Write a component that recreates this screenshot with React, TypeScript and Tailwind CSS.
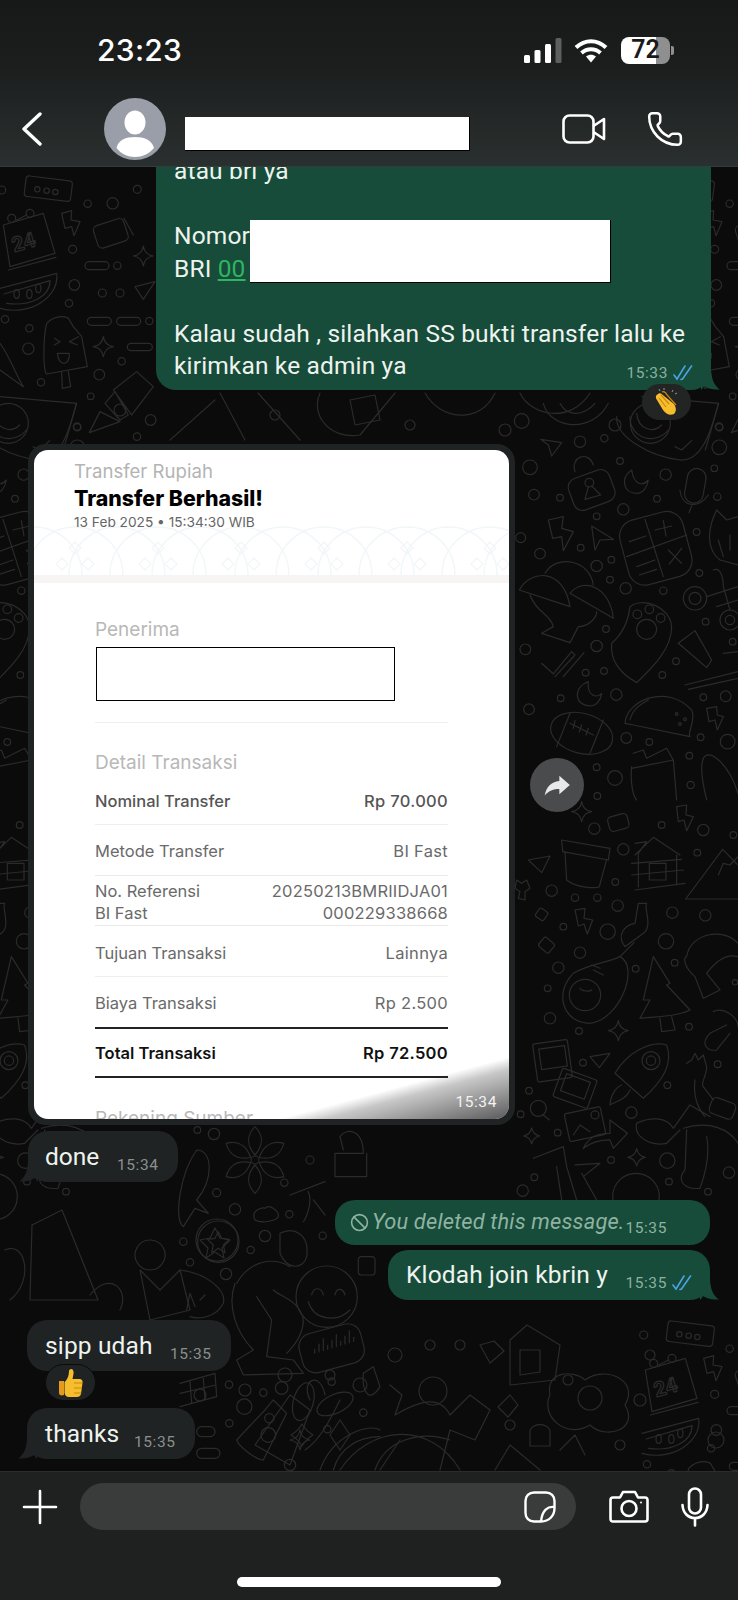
import { Ban, Phone } from "lucide-react";

const SF = "font-['Roboto','Liberation_Sans',sans-serif]";
const RECEIPT = "font-['Inter','Liberation_Sans',sans-serif]";

type Dot = [number, number, number];

function sparkle(x: number, y: number, r: number) {
  return `M${x} ${y - r}Q${x + 4} ${y - 4} ${x + r} ${y}Q${x + 4} ${y + 4} ${x} ${y + r}Q${x - 4} ${y + 4} ${x - r} ${y}Q${x - 4} ${y - 4} ${x} ${y - r}Z`;
}

function Dots({ items }: { items: Dot[] }) {
  return (
    <>
      {items.map(([x, y, r], i) => (
        <circle key={i} cx={x} cy={y} r={r} />
      ))}
    </>
  );
}

// right column, upper half
function TileRightTop() {
  const dots: Dot[] = [[35,63,22],[210,125,17],[283,115,11],[628,82,11],[628,142,22],[60,202,22],[330,183,10],[467,224,17],[613,205,10],[72,284,16],[150,293,10],[441,296,10],[622,290,11],[340,328,17],[260,349,10],[560,396,10],[32,413,15],[212,443,10],[90,461,16],[304,479,10],[260,498,17],[300,539,10],[347,565,17],[460,572,11],[568,519,10],[288,687,10],[587,665,10],[668,725,10],[46,748,16],[260,738,17],[498,784,10],[227,818,10],[282,813,10],[457,825,10],[319,884,17],[152,895,10],[580,892,10],[647,889,16],[57,928,16],[349,1014,16],[418,1026,10],[572,1012,10],[653,1025,22],[538,1067,10],[260,1102,10],[315,1134,22],[542,1155,11],[262,1188,10]];
  return (
    <g>
      <Dots items={dots} />
      <path d="M115 360L160 350L155 385L190 395L160 452L155 410L128 415Z" />
      <path d="M245 378L310 418L270 420L255 450Z" />
      <path d="M92 118L155 128L125 168L115 135Z" />
      <rect x="180" y="220" width="130" height="100" rx="28" transform="rotate(-20 245 270)" />
      <path d="M195 215C180 170 235 150 250 195" />
      <circle cx="238" cy="248" r="13" />
      <path d="M235 260L225 298L272 285L245 258" />
      <path d="M365 210C330 235 340 280 380 280C400 280 412 262 415 240C400 258 372 258 365 210Z" />
      <rect x="528" y="205" width="56" height="105" rx="28" transform="rotate(10 556 257)" />
      <path d="M510 270C515 325 570 325 595 285M545 318L537 338" />
      <rect x="340" y="345" width="195" height="200" rx="50" transform="rotate(-15 437 445)" />
      <path d="M405 358L460 530M350 470L530 405M435 390L485 378M460 362L468 408M358 425L408 408M475 450L515 490M515 445L478 492M380 500L435 480M388 525L440 508" />
      <path d="M28 570C60 510 160 500 180 620ZM180 580C220 530 300 560 310 655ZM105 520C140 460 240 480 250 555M60 585C80 640 120 640 130 680L95 700L180 728L205 680C240 680 260 650 260 635" />
      <path d="M360 620C400 590 480 620 485 680C485 750 420 810 380 848C330 820 300 780 305 730C340 700 355 660 360 620Z" />
      <Dots items={[[410,688,30],[382,643,13],[418,628,13],[452,654,13]]} />
      <path d="M95 790L130 822L185 755L195 765L135 830M160 830L222 758" />
      <path d="M235 845C190 860 190 915 240 918C260 918 272 900 275 880C262 895 230 890 235 845Z" />
      <ellipse cx="215" cy="1000" rx="95" ry="60" transform="rotate(15 215 1000)" />
      <path d="M180 940L140 1040M280 960L240 1060M180 970L250 1005M195 962L190 985M215 975L208 996M235 985L228 1005" />
      <path d="M345 970C350 900 470 850 545 930C560 960 530 1000 540 1010L370 975ZM360 960C370 920 400 910 415 900" />
      <Dots items={[[500,942,4],[525,958,4],[510,972,4]]} />
      <path d="M505 730L555 692L605 780L590 803L575 790Z" />
      <Dots items={[[555,595,35],[555,595,18],[660,660,30],[660,660,14]]} />
      <path d="M590 590L684 560M610 510C630 500 640 530 640 560L660 630M620 620L684 600" />
      <path d="M320 50C315 110 420 170 510 180C570 185 600 110 625 10M360 50C360 120 440 135 475 90M380 40C385 90 430 100 455 75M495 140L515 150L545 122" />
      <path d="M100 10C120 90 250 100 295 10M150 10C170 50 220 50 255 10" />
      <path d="M620 330C590 390 590 450 630 480L684 495M620 330L650 360L684 350M625 420L640 470M660 405L660 450" />
      <path d="M370 1060L400 1050L410 1075L470 1045L490 1080L500 1200M365 1100C360 1150 370 1190 380 1200M365 1105L490 1080" />
      <path d="M580 1075C600 1040 660 1100 684 1180M590 1200C575 1140 570 1100 580 1075" />
      <path d="M590 925L620 920L622 945L640 950L622 990L615 960L597 965Z" />
      <path d="M525 855L684 815M535 868L684 835M640 760L684 755" />
    </g>
  );
}

// right column, lower half
function TileRightBottom() {
  const dots: Dot[] = [[253,86,17],[340,148,17],[455,75,10],[580,90,17],[670,105,10],[562,158,10],[125,272,17],[316,246,10],[195,293,11],[262,293,11],[323,317,17],[487,338,17],[586,346,17],[160,380,10],[293,395,23],[468,424,23],[210,458,17],[145,503,17],[494,488,10],[377,506,10],[113,565,10],[120,655,17],[537,680,10],[207,693,10],[675,547,8],[219,788,10],[623,793,10],[472,856,10],[57,872,10],[32,943,10],[364,938,17],[143,998,10],[303,1080,10],[472,1082,23],[657,1118,17],[73,1132,10],[477,1145,10],[38,1172,17],[594,1175,10]];
  return (
    <g>
      <Dots items={dots} />
      <path d="M155 120L300 145L295 180L158 155ZM165 155L170 240C200 265 260 265 268 260L290 178" />
      <path d="M375 165L430 112L510 165M385 160L385 260M500 165L500 255M365 190L515 178M365 225L520 210M375 270L525 250M375 130L410 125L385 160" />
      <rect x="418" y="190" width="50" height="50" />
      <path d="M527 297L638 148L684 195M527 297L684 297M625 225L640 190L660 195L684 170" />
      <path d="M345 440L400 400C430 380 400 320 410 310L385 310L375 370C340 375 320 410 345 440Z" />
      <path d="M330 470C390 500 330 660 240 670C160 670 130 580 190 520C240 490 290 490 330 470ZM210 565C215 575 240 575 245 570M250 510L280 525M245 495L270 505M330 470L372 428" />
      <circle cx="225" cy="585" r="47" />
      <path d="M430 470L480 550L470 555L540 630C500 650 440 650 390 655L420 600L400 600ZM450 655L455 695L495 690L485 650" />
      <path d="M530 470C540 400 640 380 684 430M555 530C520 500 520 470 530 470M555 530L580 595L630 570L590 520C620 480 650 460 684 470" />
      <path d="M610 635C640 620 684 650 684 680M650 675L600 700C570 730 590 755 620 750L660 700" />
      <rect x="75" y="725" width="105" height="115" rx="6" transform="rotate(-8 127 782)" />
      <rect x="90" y="742" width="78" height="62" transform="rotate(-8 127 772)" />
      <rect x="140" y="820" width="110" height="90" rx="6" transform="rotate(20 195 865)" />
      <rect x="158" y="832" width="76" height="54" transform="rotate(20 195 860)" />
      <rect x="170" y="930" width="110" height="85" rx="6" transform="rotate(-12 225 972)" />
      <path d="M190 1005L210 975L240 995" />
      <circle cx="255" cy="945" r="12" />
      <path d="M240 770L300 760L268 803Z" />
      <path d="M315 820C350 760 420 720 470 735C490 790 460 840 400 895ZM335 855C310 865 300 900 300 915C330 900 350 895 360 870" />
      <Dots items={[[423,782,27],[423,782,14]]} />
      <path d="M530 790L545 780L555 760L565 780L580 765L590 800C590 830 570 850 580 860L610 900M555 840C550 880 560 920 585 950" />
      <rect x="600" y="900" width="75" height="50" rx="14" transform="rotate(20 637 925)" />
      <path d="M380 970C420 950 470 950 490 985L540 915L600 950M520 985C600 960 660 990 684 1030M380 970C370 1010 420 1040 470 1030L510 990M530 990L525 1110C500 1140 520 1170 570 1165C590 1110 600 1060 590 1010" />
      <path d="M220 1045C240 1005 270 1000 300 1000L300 960L352 1000L310 1045L300 1020C270 1020 240 1030 220 1045Z" />
      <path d={sparkle(215, 35, 30)} />
      <path d={sparkle(325, 692, 30)} />
      <path d={sparkle(380, 1072, 26)} />
      <path d={sparkle(65, 1008, 24)} />
      <circle cx="378" cy="1190" r="70" />
      <path d="M500 20L530 15L528 45L550 50L530 92L522 60L505 65ZM195 330L225 325L222 355L248 360L232 402L222 372L205 378Z" />
      <path d="M70 1075L160 1040L170 1100L200 1200M140 1100L155 1200M195 1095L270 1090L220 1130M215 1120L260 1200" />
      <path d="M20 240L35 250L50 240L60 265L45 275L45 300L25 295L30 275L15 265Z" />
      <rect x="80" y="328" width="30" height="30" rx="6" transform="rotate(35 95 343)" />
      <rect x="90" y="418" width="40" height="35" rx="7" transform="rotate(40 110 435)" />
      <rect x="295" y="45" width="60" height="45" rx="12" transform="rotate(-15 325 67)" />
      <path d="M55 180L120 168L95 218Z" />
      <circle cx="85" cy="925" r="24" />
      <path d="M100 945L118 960" />
    </g>
  );
}

// top left of the chat, comes back at the bottom right
function TileCorner() {
  const dots: Dot[] = [[412,58,12],[263,101,11],[338,100,17],[218,238,12],[352,287,11],[223,345,16],[307,369,12],[360,369,12],[207,400,11],[15,448,11],[88,475,11],[448,453,11],[85,536,17],[365,574,11],[298,614,16],[123,637,11],[272,679,10],[231,770,11],[452,750,16],[411,800,11],[5,60,12]];
  return (
    <g>
      <Dots items={dots} />
      <rect x="75" y="25" width="140" height="62" rx="10" transform="rotate(7 145 56)" />
      <Dots items={[[112,58,8],[140,62,8],[166,66,8]]} />
      <path d="M10 165L130 130L165 250L30 290ZM25 300L168 262M50 150L80 135" />
      <Dots items={[[35,145,12],[90,130,12]]} />
      <text x="35" y="238" fontSize="62" fontFamily="Roboto, sans-serif" fontWeight="700" transform="rotate(-16 70 215)">24</text>
      <path d="M185 130L215 122L213 150L240 155L222 197L215 170L195 175Z" />
      <rect x="285" y="155" width="95" height="70" rx="14" transform="rotate(-18 332 190)" />
      <path d="M372 145L400 195" />
      <path d={sparkle(430, 258, 30)} />
      <path d="M405 350L465 335L430 388Z" />
      <rect x="255" y="275" width="72" height="24" rx="12" />
      <rect x="262" y="442" width="72" height="24" rx="12" />
      <rect x="350" y="442" width="72" height="24" rx="12" />
      <rect x="382" y="520" width="75" height="22" rx="11" />
      <path d="M0 355L170 310C180 380 90 440 0 415M12 372L150 332C150 380 90 410 20 400" />
      <ellipse cx="50" cy="372" rx="8" ry="13" />
      <ellipse cx="88" cy="372" rx="8" ry="13" />
      <ellipse cx="115" cy="355" rx="8" ry="13" />
      <path d="M140 460C170 430 205 440 208 450L220 470L245 500L262 590L140 612C128 600 130 500 140 460ZM185 608L187 655L212 650L205 605M163 505L180 515L163 525M235 500L208 515L232 525M172 550L208 550C210 590 175 590 172 550Z" />
      <path d={sparkle(310, 530, 30)} />
      <path d="M340 660L410 605L460 650L395 735ZM315 700L345 665L385 735L360 750ZM268 788L300 725L360 755Z" />
      <circle cx="25" cy="760" r="60" />
      <path d="M0 680L230 700L190 840M0 520C30 560 50 620 70 650L0 600" />
    </g>
  );
}

// middle of the chat, under the receipt
function TileMiddle() {
  const dots: Dot[] = [[52,30,10],[102,42,17],[390,120,12],[313,188,11],[110,218,12],[165,268,17],[328,283,11],[255,348,17],[428,347,11],[10,365,11],[212,390,11],[30,427,11],[138,462,17],[147,794,11],[455,785,11],[305,804,19],[250,818,11],[193,860,23],[550,878,11],[148,910,11],[442,928,11],[330,1035,17]];
  return (
    <g>
      <Dots items={dots} />
      {[0, 60, 120, 180, 240, 300].map((a) => (
        <path key={a} d="M225 105C195 70 205 40 225 20C245 40 255 70 225 105Z" transform={`rotate(${a} 225 120)`} />
      ))}
      <circle cx="225" cy="120" r="12" />
      <path d="M50 90C100 90 100 180 50 240L85 280L45 265L10 320C-20 300 0 160 50 90Z" />
      <circle cx="115" cy="365" r="62" />
      <path d="M115 335L125 355L148 358L130 375L135 398L115 385L95 398L100 375L82 358L105 355Z" />
      <path d="M170 490C210 420 280 410 330 440M165 490C140 560 170 640 220 690L170 720L190 765L370 760L340 720L260 710L275 600L230 530M280 510C300 530 360 540 370 600C370 640 350 670 320 700M300 340C340 320 390 340 380 410C370 450 320 450 300 400Z" />
      <circle cx="440" cy="530" r="92" />
      <path d="M395 525C400 500 425 500 430 525M465 525C470 500 490 505 495 525M385 545C400 600 470 610 510 570" />
      <rect x="360" y="625" width="190" height="120" rx="40" transform="rotate(-15 455 685)" />
      {[0, 1, 2, 3, 4, 5, 6, 7, 8, 9].map((i) => (
        <path key={i} d={`M${404 + i * 13} ${700 - i * 4}v-${12 + (i % 3) * 12}`} />
      ))}
      <ellipse cx="370" cy="845" rx="30" ry="58" transform="rotate(15 370 845)" />
      <ellipse cx="465" cy="852" rx="58" ry="28" transform="rotate(-25 465 852)" />
      <path d="M170 960C175 980 230 1020 250 1020L320 880L280 840L255 870Z" />
      <Dots items={[[268,895,14],[265,945,22]]} />
      <path d={sparkle(360, 960, 30)} />
      <path d="M490 90L480 50C500 20 550 30 550 100L465 100L465 170L560 170L560 100" />
      <path d="M330 225L435 185M385 215C400 250 375 300 370 305M400 240L435 285" />
      <path d="M225 300C210 270 250 260 255 265C270 250 295 275 295 285C300 305 240 310 225 300Z" />
      <path d="M0 450C80 460 140 510 130 550C110 590 60 600 30 590M20 570L30 520L45 560M60 540L75 525" />
      <path d="M0 790L105 760L110 830L0 860M30 785L35 850M70 775L75 840M0 820L108 795" />
      <rect x="50" y="920" width="55" height="30" rx="15" />
      <rect x="50" y="985" width="70" height="30" rx="15" />
      <rect x="535" y="410" width="50" height="55" rx="10" />
      <path d="M420 1050C460 940 570 910 600 930M460 1050C480 980 540 950 600 950M550 760L580 740L600 800C570 850 545 820 550 760Z" />
    </g>
  );
}

function Wallpaper() {
  const third = "scale(0.3333)";
  return (
    <svg
      className="absolute inset-0 h-full w-full"
      viewBox="0 167 738 1304"
      fill="none"
      stroke="#2b2b2b"
      strokeWidth="3.6"
      strokeLinecap="round"
      strokeLinejoin="round"
    >
      <g transform={`translate(0 170) ${third}`}><TileCorner /></g>
      <g transform={`translate(642 170) ${third}`}><TileCorner /></g>
      <g transform={`translate(642 1315) ${third}`}><TileCorner /></g>
      <g transform={`translate(510 400) ${third}`}><TileRightTop /></g>
      <g transform={`translate(-132 400) ${third}`}><TileRightTop /></g>
      <g transform={`translate(510 800) ${third}`}><TileRightBottom /></g>
      <g transform={`translate(-132 800) ${third}`}><TileRightBottom /></g>
      <g transform={`translate(180 1120) ${third}`}><TileMiddle /></g>
      {/* bottom strip and the left side under the bubbles */}
      <g strokeWidth="1.2">
        <path d="M32 1225L62 1210L98 1300L30 1300ZM150 1240a15 15 0 1 0 .1 0M90 1295C110 1270 130 1290 120 1310" />
        <path d="M140 1270L160 1290L180 1270L190 1310L150 1320ZM90 1330C110 1310 125 1330 125 1370M5 1250C25 1240 35 1280 10 1300" />
        <circle cx="217" cy="1240" r="21" />
        <path d="M215 1228L220 1238L230 1240L222 1248L224 1258L215 1252L206 1258L208 1248L200 1240L210 1238Z" />
        <path d="M510 1340L527 1325L560 1345L555 1380L510 1385ZM520 1350L520 1375L540 1372L540 1350Z" />
        <path d="M480 1345l14 -4l10 10l-14 12zM510 1395l8 10l-10 12l-10 -10z" />
        <path d="M550 1395C545 1370 575 1370 585 1380C605 1365 640 1380 625 1405C640 1430 605 1440 590 1425C565 1440 540 1415 550 1395Z" />
        <circle cx="590" cy="1398" r="12" />
        <path d="M390 1385L402 1395L395 1415C420 1400 440 1395 450 1415L470 1395L490 1410L475 1440L450 1430L440 1470M375 1470C385 1440 420 1430 450 1440" />
        <circle cx="433" cy="1391" r="14" />
        <path d="M255 1445L290 1395L310 1410L290 1465ZM310 1400C300 1380 320 1370 325 1395M340 1400C330 1420 320 1440 305 1450" />
        <path d="M530 1430a12 12 0 0 1 20 0v16h-20zM560 1450l15 -15l10 20M340 1420l10 15l-10 15l-10 -15z" />
        <path d="M340 1470C370 1425 430 1420 460 1470M380 1470L400 1440M495 1470L510 1445L540 1470" />
        <path d={sparkle(302, 1435, 11)} />
        <Dots items={[[245,1390,6],[200,1395,6],[460,1345,5],[430,1345,5],[395,1355,7],[510,1425,5],[568,1380,5],[650,1355,5],[640,1400,6],[620,1445,5],[360,1385,7],[330,1375,5],[285,1375,7],[716,1440,8]]} />
      </g>
      {/* gap between the first bubble and the receipt */}
      <g strokeWidth="1.2">
        <path d="M220 393L245 440M258 393L300 440M320 393C310 415 330 440 360 435L395 393M425 393C440 420 480 425 495 393M520 393C530 415 570 425 590 393M170 440L215 400" />
        <path d="M350 400L375 395L380 420L355 425Z" />
        <Dots items={[[275,415,5],[410,425,5],[505,430,6],[120,410,6],[615,425,6]]} />
      </g>
    </svg>
  );
}

function DoubleCheck() {
  return (
    <svg width="20" height="16" viewBox="0 0 20 16" fill="none" stroke="#4ba3e0" strokeWidth="1.6" strokeLinecap="round">
      <path d="M1 10L4 14L12 1M8 14.5L9.5 14L18.5 1" />
    </svg>
  );
}

function TailRight() {
  return (
    <svg className="absolute bottom-0 right-[-10px]" width="20" height="22" viewBox="0 0 20 22" fill="#164c39">
      <path d="M0 0H10C10 10 13 18 19 21.5C12 22 6 20 3 18C2 20 0 22 0 22Z" />
    </svg>
  );
}

function TailLeft() {
  return (
    <svg className="absolute bottom-0 left-[-10px]" width="20" height="22" viewBox="0 0 20 22" fill="#1f2323">
      <path d="M20 0H10C10 10 7 18 1 21.5C8 22 14 20 17 18C18 20 20 22 20 22Z" />
    </svg>
  );
}

function ClapEmoji() {
  return (
    <svg width="30" height="30" viewBox="0 0 30 30">
      <path d="M6 7C8 5 10 7 12 9L22 17C24 20 25 24 22 27C18 29 14 27 11 23L5 13C3 10 4 8 6 7Z" fill="#f6bd2d" />
      <path d="M10 5C12 4 14 6 15 8L24 18M7 11L14 20M9 8L17 17" stroke="#c98712" strokeWidth="1.2" fill="none" />
      <path d="M7 2L8 4M12 1V3M21 3L20 5M25 6L23 7" stroke="#8b9aa5" strokeWidth="1" />
    </svg>
  );
}

function ThumbEmoji() {
  return (
    <svg width="26" height="30" viewBox="0 0 26 30">
      <path d="M13 1C15 1 16 3 15.5 6L14.5 11H21C24 11 25 13 24.5 15L23 26C22.5 28 21 29 19 29H11C8 29 7 27 6.5 25V14C9 12 11 8 11 3C11 2 12 1 13 1Z" fill="#f6bd2d" />
      <path d="M1 13H6V27C3 28 1 27 1 25Z" fill="#e49a1b" />
      <path d="M16 15H24M16 20H24M16 25H23" stroke="#c98712" strokeWidth="1.2" />
    </svg>
  );
}

function Time({ text, className }: { text: string; className?: string }) {
  return (
    <span className={`absolute text-[15.5px] leading-[18px] tracking-[0.6px] ${className ?? ""}`}>{text}</span>
  );
}

function ReceiptRow({ label, value, strong }: { label: string; value: string; strong?: string }) {
  return (
    <div className={`flex h-[24px] items-center justify-between pt-[1px] text-[16.5px] ${strong ?? "text-[#6a6a6a]"}`}>
      <span>{label}</span>
      <span className="tracking-[0.3px]">{value}</span>
    </div>
  );
}

function Receipt() {
  return (
    <div className={`relative h-[669px] w-[475px] overflow-hidden rounded-[14px] bg-white ${RECEIPT}`}>
      <div className="relative h-[125px] pl-[40px] pt-[9px]">
        <svg className="absolute inset-0 h-full w-full" viewBox="0 0 475 125" fill="none" stroke="#f1f6f8" strokeWidth="1.3">
          {[0, 1, 2, 3, 4, 5, 6].map((i) => (
            <g key={i}>
              <circle cx={i * 83} cy="125" r="48" />
              <circle cx={41 + i * 83} cy="125" r="48" />
              <path d={`M${41 + i * 83} 92l6 6l-6 6l-6 -6zM${28 + i * 83} 108l6 6l-6 6l-6 -6zM${54 + i * 83} 108l6 6l-6 6l-6 -6z`} />
            </g>
          ))}
        </svg>
        <div className="relative">
          <p className="h-[24px] text-[18.6px] leading-[25px] text-[#b4b4b4]">Transfer Rupiah</p>
          <p className="mt-[3px] h-[24px] text-[21.3px] font-extrabold leading-[25px] text-black">Transfer Berhasil!</p>
          <p className="mt-[2px] h-[20px] text-[13.7px] leading-[20px] text-[#666666]">13 Feb 2025 • 15:34:30 WIB</p>
        </div>
      </div>
      <div className="h-[8px] bg-[#f6f5f4]" />
      <div className="pl-[61px] pr-[61px]">
        <p className="mt-[34px] h-[24px] text-[19px] leading-[26px] text-[#b8b8b8]">Penerima</p>
        <div className="ml-[1px] mt-[6px] h-[54px] w-[299px] border border-black bg-white" />
        <div className="mt-[21px] h-px bg-[#efefef]" />
        <p className="mt-[27px] h-[24px] text-[19px] leading-[26px] text-[#b8b8b8]">Detail Transaksi</p>
        <div className="mt-[15px]">
          <ReceiptRow label="Nominal Transfer" value="Rp 70.000" strong="font-medium text-[#555555]" />
        </div>
        <div className="mt-[11px] h-px bg-[#efefef]" />
        <div className="mt-[14px]">
          <ReceiptRow label="Metode Transfer" value="BI Fast" />
        </div>
        <div className="mt-[12px] h-px bg-[#e9e9e9]" />
        <div className="mt-[3px] flex justify-between pt-[1px] text-[16.5px] leading-[22px] text-[#6a6a6a]">
          <span>No. Referensi<br />BI Fast</span>
          <span className="text-right tracking-[0.2px]">20250213BMRIIDJA01<br />000229338668</span>
        </div>
        <div className="mt-[1px] h-px bg-[#e9e9e9]" />
        <div className="mt-[15px]">
          <ReceiptRow label="Tujuan Transaksi" value="Lainnya" />
        </div>
        <div className="mt-[11px] h-px bg-[#efefef]" />
        <div className="mt-[14px]">
          <ReceiptRow label="Biaya Transaksi" value="Rp 2.500" />
        </div>
        <div className="mt-[12px] h-[2px] bg-[#222222]" />
        <div className="mt-[12px]">
          <ReceiptRow label="Total Transaksi" value="Rp 72.500" strong="font-semibold text-[#111111]" />
        </div>
        <div className="mt-[11px] h-[2px] bg-[#222222]" />
        <p className="mt-[29px] text-[19px] leading-[24px] text-[#b8b8b8]">Rekening Sumber</p>
      </div>
      <div className="absolute bottom-0 right-0 h-[62px] w-[230px] bg-[linear-gradient(to_bottom_right,rgba(70,70,70,0)_50%,rgba(70,70,70,0.3)_60%,#5a5a5a_100%)]" />
      <Time text="15:34" className={`bottom-[8px] right-[12px] text-[#f2f2f2] ${SF}`} />
    </div>
  );
}

export default function App() {
  return (
    <div className={`flex h-[1600px] w-[738px] flex-col overflow-hidden bg-[#0b0b0b] ${SF}`}>
      <header className="relative z-10 h-[167px] shrink-0 border-b border-[#353b39] bg-[linear-gradient(180deg,#171818_0%,#1c1e1e_40%,#2a302f_100%)] text-white">
        <div className="mt-[34px] flex h-[32px] items-center pl-[97px] pr-[64px]">
          <span className={`text-[30px] font-medium tracking-[0.3px] ${RECEIPT}`}>23:23</span>
          <svg className="ml-auto" width="38" height="25" viewBox="0 0 38 25" fill="#fff">
            <rect x="0" y="17" width="6" height="8" rx="1.5" />
            <rect x="10.5" y="12" width="6" height="13" rx="1.5" />
            <rect x="21" y="6" width="6" height="19" rx="1.5" />
            <rect x="31.5" y="0" width="6" height="25" rx="1.5" fill="#5c5f5f" />
          </svg>
          <svg className="ml-[12px]" width="34" height="25" viewBox="0 0 34 25" fill="none" stroke="#fff" strokeWidth="4">
            <path d="M2 9.5C11 1 23 1 32 9.5M7.5 15C13 10 21 10 26.5 15" />
            <path d="M12 18.5C15 16 19 16 22 18.5L17 24.5Z" fill="#fff" stroke="none" />
          </svg>
          <div className="ml-[13px] flex h-[27px] w-[49px] items-center justify-center rounded-[8px] bg-[linear-gradient(90deg,#ffffff_71%,#8f8f8f_71%)] text-[25px] font-semibold text-[#1a1a1a]">
            72
          </div>
          <div className="ml-[1px] h-[9px] w-[3px] rounded-r-[2px] bg-[#8f8f8f]" />
        </div>
        <div className="mt-[32px] flex h-[62px] items-center pl-[22px] pr-[54px]">
          <svg width="20" height="34" viewBox="0 0 20 34" fill="none" stroke="#fff" strokeWidth="3.4" strokeLinecap="round" strokeLinejoin="round">
            <path d="M18 2L2 17L18 32" />
          </svg>
          <svg className="ml-[62px]" width="62" height="62" viewBox="0 0 62 62">
            <circle cx="31" cy="31" r="31" fill="#9a9ea8" />
            <ellipse cx="31" cy="24.5" rx="10.5" ry="12" fill="#fff" />
            <path d="M12.5 50C14 42 22 39 31 39C40 39 48 42 50 50C45 56 38 59 31 59C24 59 17 56 12.5 50Z" fill="#fff" />
          </svg>
          <div className="ml-[19px] mt-[10px] h-[34px] w-[285px] border-b border-r border-black bg-white" />
          <svg className="ml-auto" width="44" height="30" viewBox="0 0 44 30" fill="none" stroke="#fff" strokeWidth="2.6" strokeLinejoin="round">
            <rect x="1.5" y="1.5" width="30" height="27" rx="6" />
            <path d="M31.5 12L42 5V25L31.5 18" />
          </svg>
          <Phone className="ml-[40px]" size={38} strokeWidth={1.6} />
        </div>
      </header>

      <main className="relative min-h-0 flex-1 overflow-hidden">
        <Wallpaper />
        <div className="relative flex flex-col text-[24.5px] text-[#eef3f0]">
          {/* first bubble runs on above the header */}
          <div className="relative ml-[156px] mt-[-23px] h-[246px] w-[555px] rounded-[20px] bg-[#164c39] pl-[18px] pt-[11px] leading-[32.5px] tracking-[0.15px]">
            <TailRight />
            <p>atau bri ya</p>
            <p className="mt-[32.5px]">Nomor</p>
            <p>
              BRI <span className="text-[#2fb462] underline">00</span>
            </p>
            <p className="mt-[32.5px]">Kalau sudah , silahkan SS bukti transfer lalu ke</p>
            <p>kirimkan ke admin ya</p>
            <div className="absolute left-[94px] top-[76px] h-[63px] w-[361px] border-b border-r border-black bg-white" />
            <Time text="15:33" className="bottom-[8px] right-[43px] text-[#8db0a1]" />
            <span className="absolute bottom-[9px] right-[18px]"><DoubleCheck /></span>
            <div className="absolute bottom-[-30px] right-[20px] flex h-[36px] w-[49px] items-center justify-center rounded-full bg-[#232525]">
              <ClapEmoji />
            </div>
          </div>

          <div className="mt-[54px] flex items-center">
            <div className="ml-[28px] rounded-[18px] bg-[#1f2323] p-[6px]">
              <Receipt />
            </div>
            <div className="ml-[15px] flex h-[54px] w-[54px] items-center justify-center rounded-full bg-[#4a4b4d]">
              <svg width="30" height="28" viewBox="0 0 24 24" fill="#e8e8e8">
                <path d="M14 4L23 12L14 20V15.5C9 15.5 5 17 1.5 21C2.5 14 7 9 14 8.5Z" />
              </svg>
            </div>
          </div>

          <div className="relative ml-[28px] mt-[6px] h-[51px] w-[150px] rounded-[20px] bg-[#1f2323] pl-[17px] leading-[51px]">
            <TailLeft />
            done
            <Time text="15:34" className="left-[89px] top-[25px] text-[#8b8f8f]" />
          </div>

          <div className="relative ml-[335px] mt-[18px] flex h-[45px] w-[375px] items-center rounded-[20px] bg-[#164c39] pl-[15px] text-[21.8px] italic tracking-[0.2px] text-[#8fb3a2]">
            <Ban size={19} className="mr-[3px] shrink-0" strokeWidth={2} />
            You deleted this message.
            <Time text="15:35" className="bottom-[8px] right-[43px] not-italic" />
          </div>

          <div className="relative ml-[388px] mt-[5px] h-[50px] w-[322px] rounded-[20px] bg-[#164c39] pl-[18px] leading-[50px] tracking-[0.15px]">
            <TailRight />
            Klodah join kbrin y
            <Time text="15:35" className="bottom-[8px] right-[43px] text-[#8db0a1]" />
            <span className="absolute bottom-[9px] right-[18px]"><DoubleCheck /></span>
          </div>

          <div className="relative ml-[27px] mt-[20px] h-[51px] w-[204px] rounded-[20px] bg-[#1f2323] pl-[18px] leading-[51px] tracking-[0.15px]">
            sipp udah
            <Time text="15:35" className="left-[143px] top-[25px] text-[#8b8f8f]" />
            <div className="absolute left-[18px] top-[44px] flex h-[37px] w-[51px] items-center justify-center rounded-full border border-[#0b0b0b] bg-[#1f2323]">
              <ThumbEmoji />
            </div>
          </div>

          <div className="relative ml-[27px] mt-[37px] h-[51px] w-[168px] rounded-[20px] bg-[#1f2323] pl-[18px] leading-[51px] tracking-[0.15px]">
            <TailLeft />
            thanks
            <Time text="15:35" className="left-[107px] top-[25px] text-[#8b8f8f]" />
          </div>
        </div>
      </main>

      <footer className="h-[129px] shrink-0 border-t border-[#2b2d2d] bg-[#1f2121]">
        <div className="mt-[11px] flex h-[47px] items-center pl-[22px]">
          <svg width="36" height="36" viewBox="0 0 36 36" stroke="#fff" strokeWidth="2.6" strokeLinecap="round">
            <path d="M18 2V34M2 18H34" />
          </svg>
          <div className="ml-[22px] flex h-[47px] w-[496px] items-center justify-end rounded-full bg-[#3a3c3c] pr-[20px]">
            <svg width="32" height="32" viewBox="0 0 32 32" fill="none" stroke="#fff" strokeWidth="2.4" strokeLinejoin="round">
              <path d="M10 1.5H22C27 1.5 30.5 5 30.5 10V17C30.5 25 25 30.5 17 30.5H10C5 30.5 1.5 27 1.5 22V10C1.5 5 5 1.5 10 1.5Z" />
              <path d="M30.5 16C24 15 18 19 17 30.5" />
            </svg>
          </div>
          <svg className="ml-[33px]" width="40" height="33" viewBox="0 0 40 33" fill="none" stroke="#fff" strokeWidth="2.6" strokeLinejoin="round">
            <path d="M4 7.5H11L14 2H26L29 7.5H36C37.5 7.5 38.5 8.5 38.5 10V29C38.5 30.5 37.5 31.5 36 31.5H4C2.5 31.5 1.5 30.5 1.5 29V10C1.5 8.5 2.5 7.5 4 7.5Z" />
            <circle cx="20" cy="18.5" r="7.5" />
            <circle cx="32" cy="12.5" r="1" fill="#fff" stroke="none" />
          </svg>
          <svg className="ml-[32px]" width="28" height="40" viewBox="0 0 28 40" fill="none" stroke="#fff" strokeWidth="2.6" strokeLinecap="round">
            <rect x="8" y="1.5" width="12" height="25" rx="6" />
            <path d="M1.5 18C2 26 7 31 14 31C21 31 26 26 26.5 18M14 31V38.5" />
          </svg>
        </div>
        <div className="mx-auto mt-[47px] h-[10px] w-[264px] rounded-full bg-white" />
      </footer>
    </div>
  );
}
